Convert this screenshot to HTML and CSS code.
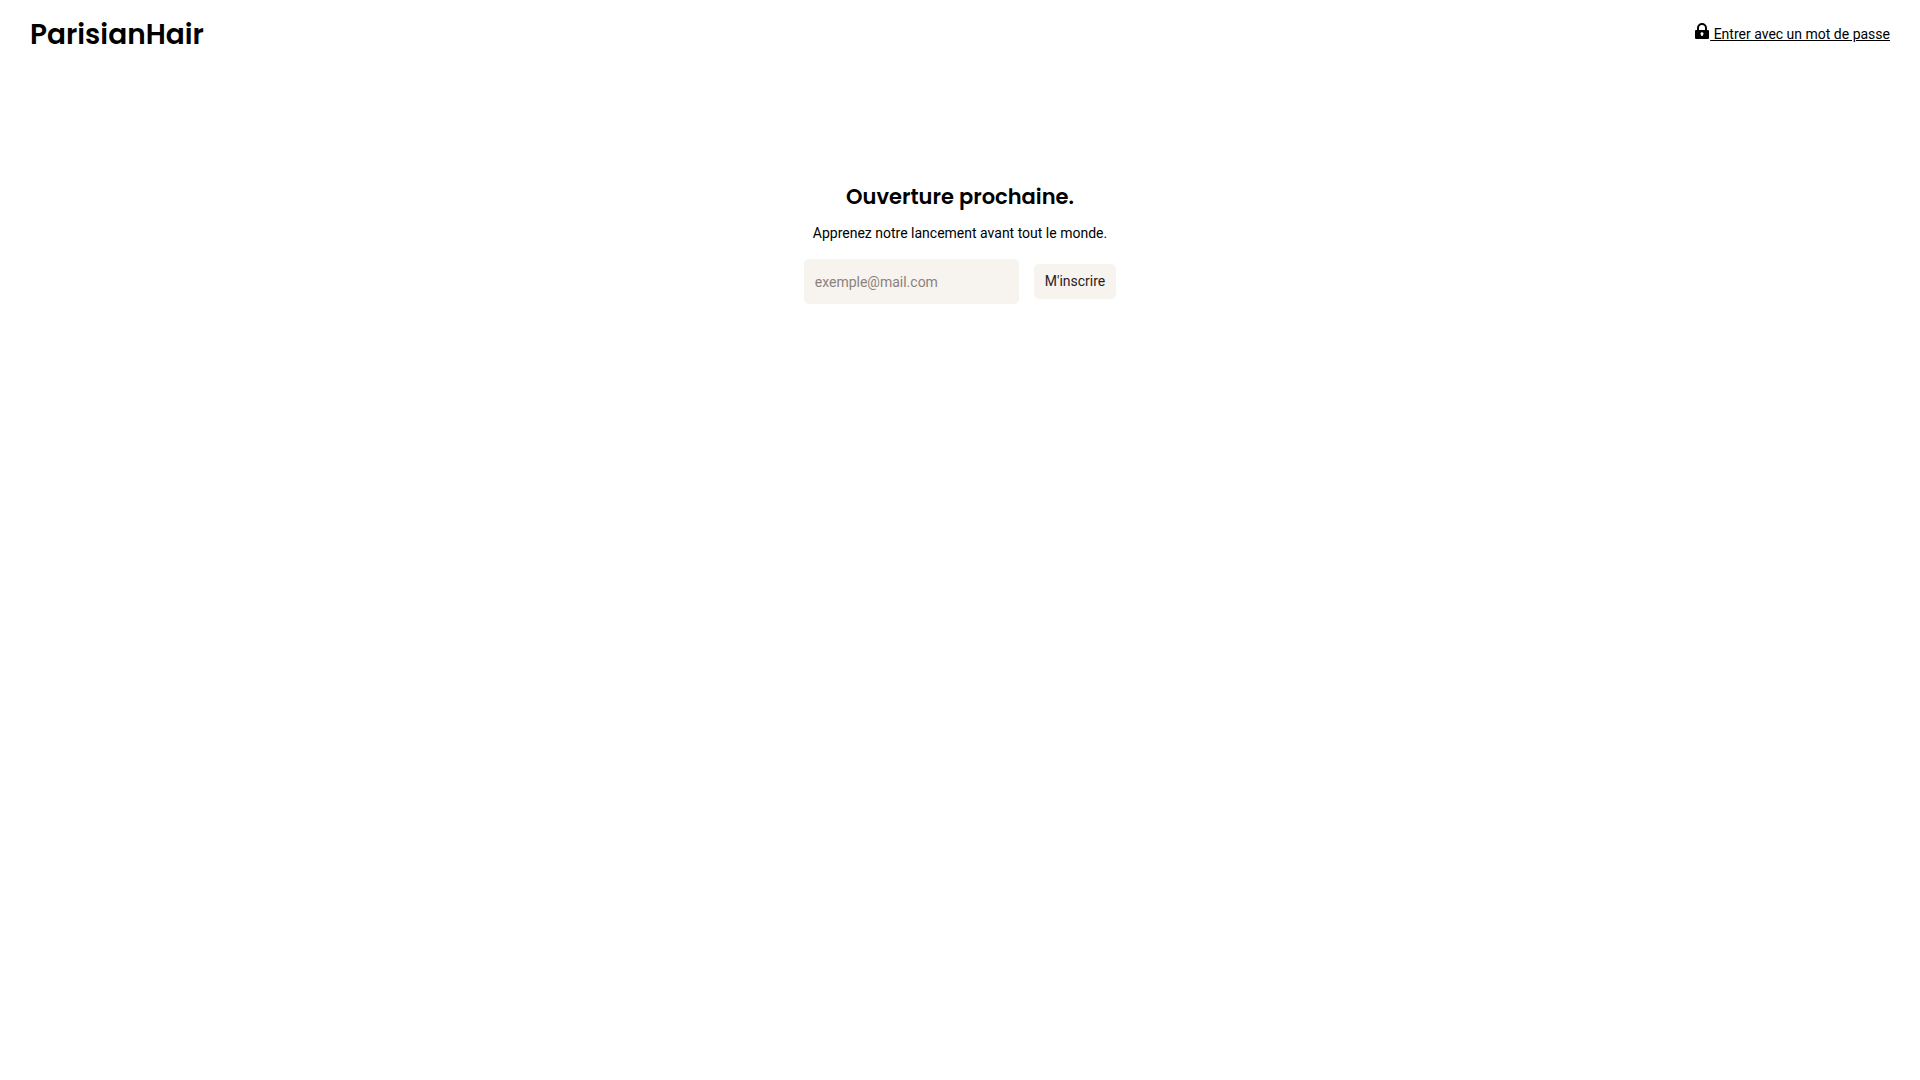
FILE: index.html
```html
<!DOCTYPE html>
<html lang="fr">
<head>
    <meta charset="UTF-8">
    <meta name="viewport" content="width=device-width, initial-scale=1.0">
    <title>ParisianHair</title>
    <link rel="stylesheet" href="styles.css">
</head>
<body>
    <!-- Header -->
    <header class="header">
        <h1 class="logo">ParisianHair</h1>
        <a href="#" class="password-link"><svg class="lock-icon" viewBox="0 0 14 16" aria-hidden="true"><path fill="currentColor" fill-rule="evenodd" d="M2 7V5a5 5 0 0 1 10 0v2h1a1 1 0 0 1 1 1v7a1 1 0 0 1-1 1H1a1 1 0 0 1-1-1V8a1 1 0 0 1 1-1h1zm2 0h6V5a3 3 0 0 0-6 0v2zm3 2.2a1.5 1.5 0 0 0-.8 2.8v1h1.6v-1A1.5 1.5 0 0 0 7 9.200z"/></svg><span class="password-text">&nbsp;Entrer avec un mot de passe</span></a>
    </header>

    <!-- Newsletter -->
    <main class="content">
        <h2 class="title">Ouverture prochaine.</h2>
        <p class="subtitle">Apprenez notre lancement avant tout le monde.</p>
        <form class="signup">
            <input type="email" class="email" name="email" placeholder="exemple@mail.com" aria-label="E-mail" required>
            <button type="submit" class="submit">M'inscrire</button>
        </form>
    </main>
</body>
</html>
```
FILE: styles.css
```css
/* General Styling */
body {
    font-family: Roboto, sans-serif;
    font-size: 14px;
    line-height: 20px;
    background: #fff;
    color: #000;
    margin: 0;
}
h1, h2 {
    font-family: Poppins, Inter, sans-serif;
    font-weight: 600;
    margin: 0;
}

/* Header */
.header {
    display: flex;
    justify-content: space-between;
    align-items: center;
    padding: 13px 30px;
}
.logo {
    font-size: 28px;
    line-height: 40px;
    padding-top: 2px;
}
.password-link {
    display: flex;
    align-items: center;
    color: #000;
    text-decoration: none;
}
.lock-icon {
    width: 14px;
    height: 16px;
    margin: 0 1px 6px 0;
}
.password-text {
    text-decoration: underline;
}

/* Newsletter */
.content {
    padding-top: 113px;
    text-align: center;
}
.title {
    font-size: 21px;
    line-height: 32px;
}
.subtitle {
    margin: 10px 0 16px;
}
.signup {
    display: flex;
    justify-content: center;
    align-items: center;
    gap: 15px;
}
.email, .submit {
    font-family: inherit;
    font-size: 14px;
    color: #2b211c;
    background: #f7f3ef;
    border: none;
    border-radius: 5px;
    box-sizing: border-box;
}
.email {
    width: 215px;
    height: 45px;
    padding: 0 11px;
}
.email::placeholder {
    color: #8b827c;
}
.submit {
    height: 35px;
    padding: 0 11px 2px;
    cursor: pointer;
}
```
